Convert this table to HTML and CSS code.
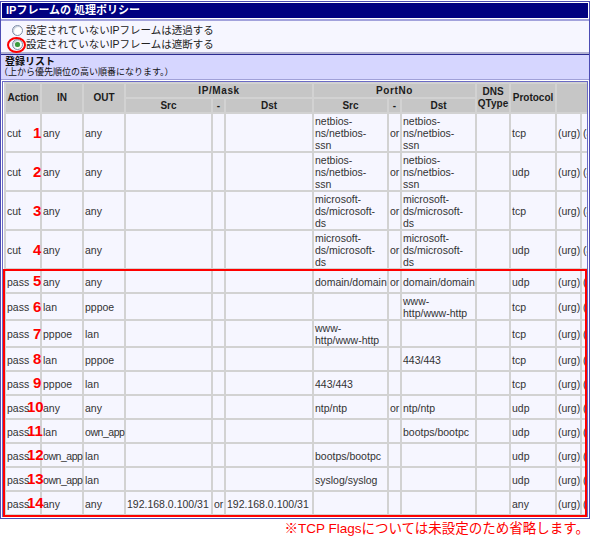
FILE: index.html
```html
<!DOCTYPE html>
<html lang="ja">
<head>
<meta charset="utf-8">
<title>IPフレームの処理ポリシー</title>
<link rel="stylesheet" href="styles.css">
</head>
<body>
<div class="page">
  <div class="frame">
    <div class="title">IPフレームの 処理ポリシー</div>
    <div class="policy">
      <div class="opt"><span class="radio"></span>設定されていないIPフレームは透過する</div>
      <div class="opt"><span class="radio on"></span>設定されていないIPフレームは遮断する</div>
    </div>
    <div class="list-head">
      <div class="list-title">登録リスト</div>
      <div class="list-note">（上から優先順位の高い順番になります。）</div>
    </div>
    <div class="grid-clip">
      <table class="grid">
        <colgroup>
          <col class="c-act"><col class="c-in"><col class="c-out">
          <col class="c-ipsrc"><col class="c-or"><col class="c-ipdst">
          <col class="c-psrc"><col class="c-or"><col class="c-pdst">
          <col class="c-dns"><col class="c-proto">
          <col class="c-flag"><col class="c-flag"><col class="c-flag"><col class="c-flag"><col class="c-flag"><col class="c-flag">
        </colgroup>
        <thead>
          <tr class="h1">
            <th rowspan="2">Action</th><th rowspan="2">IN</th><th rowspan="2">OUT</th>
            <th colspan="3" class="sp">IP/Mask</th><th colspan="3" class="sp">PortNo</th>
            <th rowspan="2">DNS<br>QType</th><th rowspan="2">Protocol</th>
            <th rowspan="2" colspan="6">TCP Flags</th>
          </tr>
          <tr class="h2"><th>Src</th><th>-</th><th>Dst</th><th>Src</th><th>-</th><th>Dst</th></tr>
        </thead>
        <tbody>
          <tr><td class="act">cut<span class="no">1</span></td><td>any</td><td>any</td><td></td><td></td><td></td><td>netbios-<br>ns/netbios-<br>ssn</td><td>or</td><td>netbios-<br>ns/netbios-<br>ssn</td><td></td><td>tcp</td><td>(urg)</td><td>(ack)</td><td>(psh)</td><td>(rst)</td><td>(syn)</td><td>(fin)</td></tr>
          <tr><td class="act">cut<span class="no">2</span></td><td>any</td><td>any</td><td></td><td></td><td></td><td>netbios-<br>ns/netbios-<br>ssn</td><td>or</td><td>netbios-<br>ns/netbios-<br>ssn</td><td></td><td>udp</td><td>(urg)</td><td>(ack)</td><td>(psh)</td><td>(rst)</td><td>(syn)</td><td>(fin)</td></tr>
          <tr><td class="act">cut<span class="no">3</span></td><td>any</td><td>any</td><td></td><td></td><td></td><td>microsoft-<br>ds/microsoft-<br>ds</td><td>or</td><td>microsoft-<br>ds/microsoft-<br>ds</td><td></td><td>tcp</td><td>(urg)</td><td>(ack)</td><td>(psh)</td><td>(rst)</td><td>(syn)</td><td>(fin)</td></tr>
          <tr><td class="act">cut<span class="no">4</span></td><td>any</td><td>any</td><td></td><td></td><td></td><td>microsoft-<br>ds/microsoft-<br>ds</td><td>or</td><td>microsoft-<br>ds/microsoft-<br>ds</td><td></td><td>udp</td><td>(urg)</td><td>(ack)</td><td>(psh)</td><td>(rst)</td><td>(syn)</td><td>(fin)</td></tr>
          <tr><td class="act">pass<span class="no">5</span></td><td>any</td><td>any</td><td></td><td></td><td></td><td>domain/domain</td><td>or</td><td>domain/domain</td><td></td><td>udp</td><td>(urg)</td><td>(ack)</td><td>(psh)</td><td>(rst)</td><td>(syn)</td><td>(fin)</td></tr>
          <tr><td class="act">pass<span class="no">6</span></td><td>lan</td><td>pppoe</td><td></td><td></td><td></td><td></td><td></td><td>www-<br>http/www-http</td><td></td><td>tcp</td><td>(urg)</td><td>(ack)</td><td>(psh)</td><td>(rst)</td><td>(syn)</td><td>(fin)</td></tr>
          <tr><td class="act">pass<span class="no">7</span></td><td>pppoe</td><td>lan</td><td></td><td></td><td></td><td>www-<br>http/www-http</td><td></td><td></td><td></td><td>tcp</td><td>(urg)</td><td>(ack)</td><td>(psh)</td><td>(rst)</td><td>(syn)</td><td>(fin)</td></tr>
          <tr><td class="act">pass<span class="no">8</span></td><td>lan</td><td>pppoe</td><td></td><td></td><td></td><td></td><td></td><td>443/443</td><td></td><td>tcp</td><td>(urg)</td><td>(ack)</td><td>(psh)</td><td>(rst)</td><td>(syn)</td><td>(fin)</td></tr>
          <tr><td class="act">pass<span class="no">9</span></td><td>pppoe</td><td>lan</td><td></td><td></td><td></td><td>443/443</td><td></td><td></td><td></td><td>tcp</td><td>(urg)</td><td>(ack)</td><td>(psh)</td><td>(rst)</td><td>(syn)</td><td>(fin)</td></tr>
          <tr><td class="act">pass<span class="no wide">10</span></td><td>any</td><td>any</td><td></td><td></td><td></td><td>ntp/ntp</td><td>or</td><td>ntp/ntp</td><td></td><td>udp</td><td>(urg)</td><td>(ack)</td><td>(psh)</td><td>(rst)</td><td>(syn)</td><td>(fin)</td></tr>
          <tr><td class="act">pass<span class="no wide">11</span></td><td>lan</td><td class="tight">own_app</td><td></td><td></td><td></td><td></td><td></td><td>bootps/bootpc</td><td></td><td>udp</td><td>(urg)</td><td>(ack)</td><td>(psh)</td><td>(rst)</td><td>(syn)</td><td>(fin)</td></tr>
          <tr><td class="act">pass<span class="no wide">12</span></td><td class="tight">own_app</td><td>lan</td><td></td><td></td><td></td><td>bootps/bootpc</td><td></td><td></td><td></td><td>udp</td><td>(urg)</td><td>(ack)</td><td>(psh)</td><td>(rst)</td><td>(syn)</td><td>(fin)</td></tr>
          <tr><td class="act">pass<span class="no wide">13</span></td><td class="tight">own_app</td><td>lan</td><td></td><td></td><td></td><td>syslog/syslog</td><td></td><td></td><td></td><td>udp</td><td>(urg)</td><td>(ack)</td><td>(psh)</td><td>(rst)</td><td>(syn)</td><td>(fin)</td></tr>
          <tr><td class="act">pass<span class="no wide">14</span></td><td>any</td><td>any</td><td>192.168.0.100/31</td><td>or</td><td>192.168.0.100/31</td><td></td><td></td><td></td><td></td><td>any</td><td>(urg)</td><td>(ack)</td><td>(psh)</td><td>(rst)</td><td>(syn)</td><td>(fin)</td></tr>
        </tbody>
      </table>
    </div>
  </div>
  <p class="footnote">※TCP Flagsについては未設定のため省略します。</p>
  <div class="mark-circle"></div>
  <div class="mark-box"></div>
</div>
</body>
</html>
```

FILE: styles.css
```css
* { box-sizing: border-box; }

html, body {
  margin: 0;
  padding: 0;
  background: #ffffff;
}

body {
  font-family: "Liberation Sans", "Noto Sans CJK JP", sans-serif;
  font-size: 10.5px;
  color: #333333;
}

.page {
  position: relative;
  width: 592px;
  height: 541px;
  overflow: hidden;
}

.frame {
  margin-top: 1px;
  width: 590px;
  border: 1px solid #4c4cb4;
  background: #ffffff;
}

.title {
  margin: 1px 1px 0;
  height: 15px;
  background: #000080;
  color: #ffffff;
  font-size: 11px;
  font-weight: bold;
  line-height: 15px;
  padding-left: 4px;
}

.policy {
  margin-top: 1px;
  border-top: 2px solid #a2a2dc;
  border-bottom: 2px solid #b2b2d2;
  background: #f6f6ff;
  padding: 2px 0 1px 11px;
  color: #222222;
}

.opt {
  display: flex;
  align-items: center;
  height: 14px;
  line-height: 14px;
}

.radio {
  position: relative;
  width: 11px;
  height: 11px;
  margin-right: 3px;
  border: 1px solid #7d8ca6;
  border-radius: 50%;
  background: #ffffff;
  box-shadow: inset 1px 1px 1px #c8d0dc;
}

.radio.on::after {
  content: "";
  position: absolute;
  left: 2px;
  top: 2px;
  width: 5px;
  height: 5px;
  border-radius: 50%;
  background: #3a9a3a;
  box-shadow: 0 0 1px #8fd08f;
}

.list-head {
  border-top: 1px solid #2a2a90;
  border-bottom: 1px solid #a0a0d8;
  background: #d6d6ff;
  height: 26px;
  padding: 1px 0 0 4px;
  color: #111111;
}

.list-title {
  font-size: 10px;
  font-weight: bold;
  line-height: 11px;
}

.list-note {
  font-size: 9px;
  line-height: 11px;
  margin-left: -6px;
  white-space: nowrap;
}

.grid-clip {
  margin: 1px 1px 1px;
  border: 1px solid #6a6ac4;
  padding-left: 1px;
  overflow: hidden;
}

.grid {
  table-layout: fixed;
  width: 703px;
  border-collapse: separate;
  border-spacing: 2px;
  background: #d2d2d2;
}

.c-act { width: 34px; }
.c-in { width: 40px; }
.c-out { width: 40px; }
.c-ipsrc { width: 85px; }
.c-or { width: 11px; }
.c-ipdst { width: 86px; }
.c-psrc { width: 73px; }
.c-pdst { width: 73px; }
.c-dns { width: 32px; }
.c-proto { width: 44px; }
.c-flag { width: 23px; }

.grid th {
  background: #c6c6c6;
  color: #1c1c1c;
  font-size: 10px;
  font-weight: bold;
  line-height: 12px;
  padding: 0;
  text-align: center;
  vertical-align: middle;
  white-space: nowrap;
  overflow: hidden;
}

.grid th.sp { letter-spacing: 0.6px; }

.grid .h1 { height: 13px; }
.grid .h2 { height: 13px; }

.grid tbody tr { height: 22px; }

.grid td {
  background: #f6f6ff;
  line-height: 12px;
  padding: 1px 0 0 1px;
  vertical-align: middle;
  white-space: nowrap;
}

.grid td.tight {
  letter-spacing: -0.45px;
}

.grid td.act {
  position: relative;
}

.no {
  position: absolute;
  left: 27px;
  top: 50%;
  margin-top: -7px;
  font-family: "Liberation Sans", sans-serif;
  font-size: 15px;
  font-weight: bold;
  line-height: 14px;
  letter-spacing: 0;
  color: #ff0000;
}

.no.wide {
  left: 21px;
}

.footnote {
  margin: 2px 0 0;
  padding-right: 3px;
  text-align: right;
  color: #ff0000;
  font-size: 13.5px;
  line-height: 16px;
  white-space: nowrap;
}

.mark-circle {
  position: absolute;
  left: 7px;
  top: 37px;
  width: 19px;
  height: 16px;
  border: 2px solid #ff0000;
  border-radius: 50%;
}

.mark-box {
  position: absolute;
  left: 3px;
  top: 269px;
  width: 584px;
  height: 248px;
  border: 2px solid #ff0000;
}
```
